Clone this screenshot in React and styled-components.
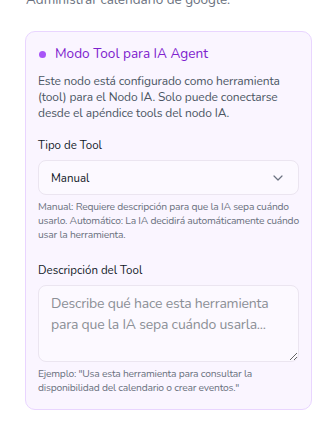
import React, { useState } from "react";
import styled, { createGlobalStyle } from "styled-components";

const GlobalStyle = createGlobalStyle`
  html, body {
    margin: 0;
    padding: 0;
    background: #ffffff;
    overflow: hidden;
  }
  body {
    font-family: "Nunito", "Lato", "Noto Sans", sans-serif;
  }
  * {
    box-sizing: border-box;
  }
`;

function App() {
  const [toolType, setToolType] = useState("manual");
  const [description, setDescription] = useState("");

  return (
    <Page>
      <GlobalStyle />
      <Intro>Administrar calendario de google.</Intro>
      <Card>
        <CardHead>
          <Dot />
          <CardTitle>Modo Tool para IA Agent</CardTitle>
        </CardHead>
        <CardText>
          Este nodo está configurado como herramienta (tool) para el Nodo IA.
          Solo puede conectarse desde el apéndice tools del nodo IA.
        </CardText>

        <Field $gap={16}>
          <Label>Tipo de Tool</Label>
          <SelectWrap>
            <Select
              value={toolType}
              onChange={(e) => setToolType(e.target.value)}
            >
              <option value="manual">Manual</option>
              <option value="auto">Automático</option>
            </Select>
            <Chevron viewBox="0 0 16 16">
              <path d="M4 6l4 4 4-4" />
            </Chevron>
          </SelectWrap>
          <Hint>
            Manual: Requiere descripción para que la IA sepa cuándo usarlo.
            Automático: La IA decidirá automáticamente cuándo usar la
            herramienta.
          </Hint>
        </Field>

        <Field $gap={20}>
          <Label>Descripción del Tool</Label>
          <TextArea
            rows={3}
            value={description}
            onChange={(e) => setDescription(e.target.value)}
            placeholder="Describe qué hace esta herramienta para que la IA sepa cuándo usarla..."
          />
          <Hint>
            Ejemplo: "Usa esta herramienta para consultar la disponibilidad del
            calendario o crear eventos."
          </Hint>
        </Field>
      </Card>
    </Page>
  );
}

export default App;

const Page = styled.div`
  width: 330px;
  height: 425px;
  padding: 0 18px 0 25px;
`;

const Intro = styled.p`
  margin: -9px 0 0 1px;
  font-size: 13.5px;
  line-height: 18px;
  color: #6b7280;
`;

const Card = styled.div`
  margin-top: 22px;
  width: 287px;
  background: #faf5ff;
  border: 1px solid #e9d5ff;
  border-radius: 10px;
  padding: 12px 12px 14px 12px;
`;

const CardHead = styled.div`
  display: flex;
  align-items: center;
  gap: 9px;
`;

const Dot = styled.span`
  flex: none;
  width: 7px;
  height: 7px;
  border-radius: 50%;
  background: #a855f7;
  margin-left: 1px;
`;

const CardTitle = styled.h3`
  margin: 0;
  font-size: 13.6px;
  font-weight: 400;
  line-height: 20px;
  color: #7e22ce;
`;

const CardText = styled.p`
  margin: 9px 0 0;
  font-size: 12px;
  letter-spacing: -0.1px;
  line-height: 16px;
  color: #4b5563;
`;

const Field = styled.div`
  margin-top: ${(p) => p.$gap}px;
  display: flex;
  flex-direction: column;
`;

const Label = styled.label`
  font-size: 11.5px;
  line-height: 16px;
  color: #111827;
  margin-bottom: 7px;
`;

const SelectWrap = styled.div`
  position: relative;
`;

const Select = styled.select`
  appearance: none;
  width: 100%;
  height: 35px;
  padding: 0 12px;
  font-family: inherit;
  font-size: 11.5px;
  color: #111827;
  background: #fcf9ff;
  border: 1px solid #ebe5f0;
  border-radius: 8px;
  outline: none;
`;

const Chevron = styled.svg`
  position: absolute;
  right: 13px;
  top: 10px;
  width: 16px;
  height: 16px;
  fill: none;
  stroke: #6b7280;
  stroke-width: 1.2;
  stroke-linecap: round;
  stroke-linejoin: round;
  pointer-events: none;
`;

const Hint = styled.p`
  margin: 5px 0 0;
  font-size: 10.3px;
  letter-spacing: -0.22px;
  line-height: 14px;
  color: #6b7280;
`;

const TextArea = styled.textarea`
  width: 100%;
  height: 77px;
  padding: 7px 12px;
  font-family: inherit;
  font-size: 14px;
  letter-spacing: -0.2px;
  line-height: 21px;
  color: #111827;
  background: #fcf9ff;
  border: 1px solid #ebe5f0;
  border-radius: 8px;
  outline: none;

  &::placeholder {
    color: #8b8f96;
  }
`;
